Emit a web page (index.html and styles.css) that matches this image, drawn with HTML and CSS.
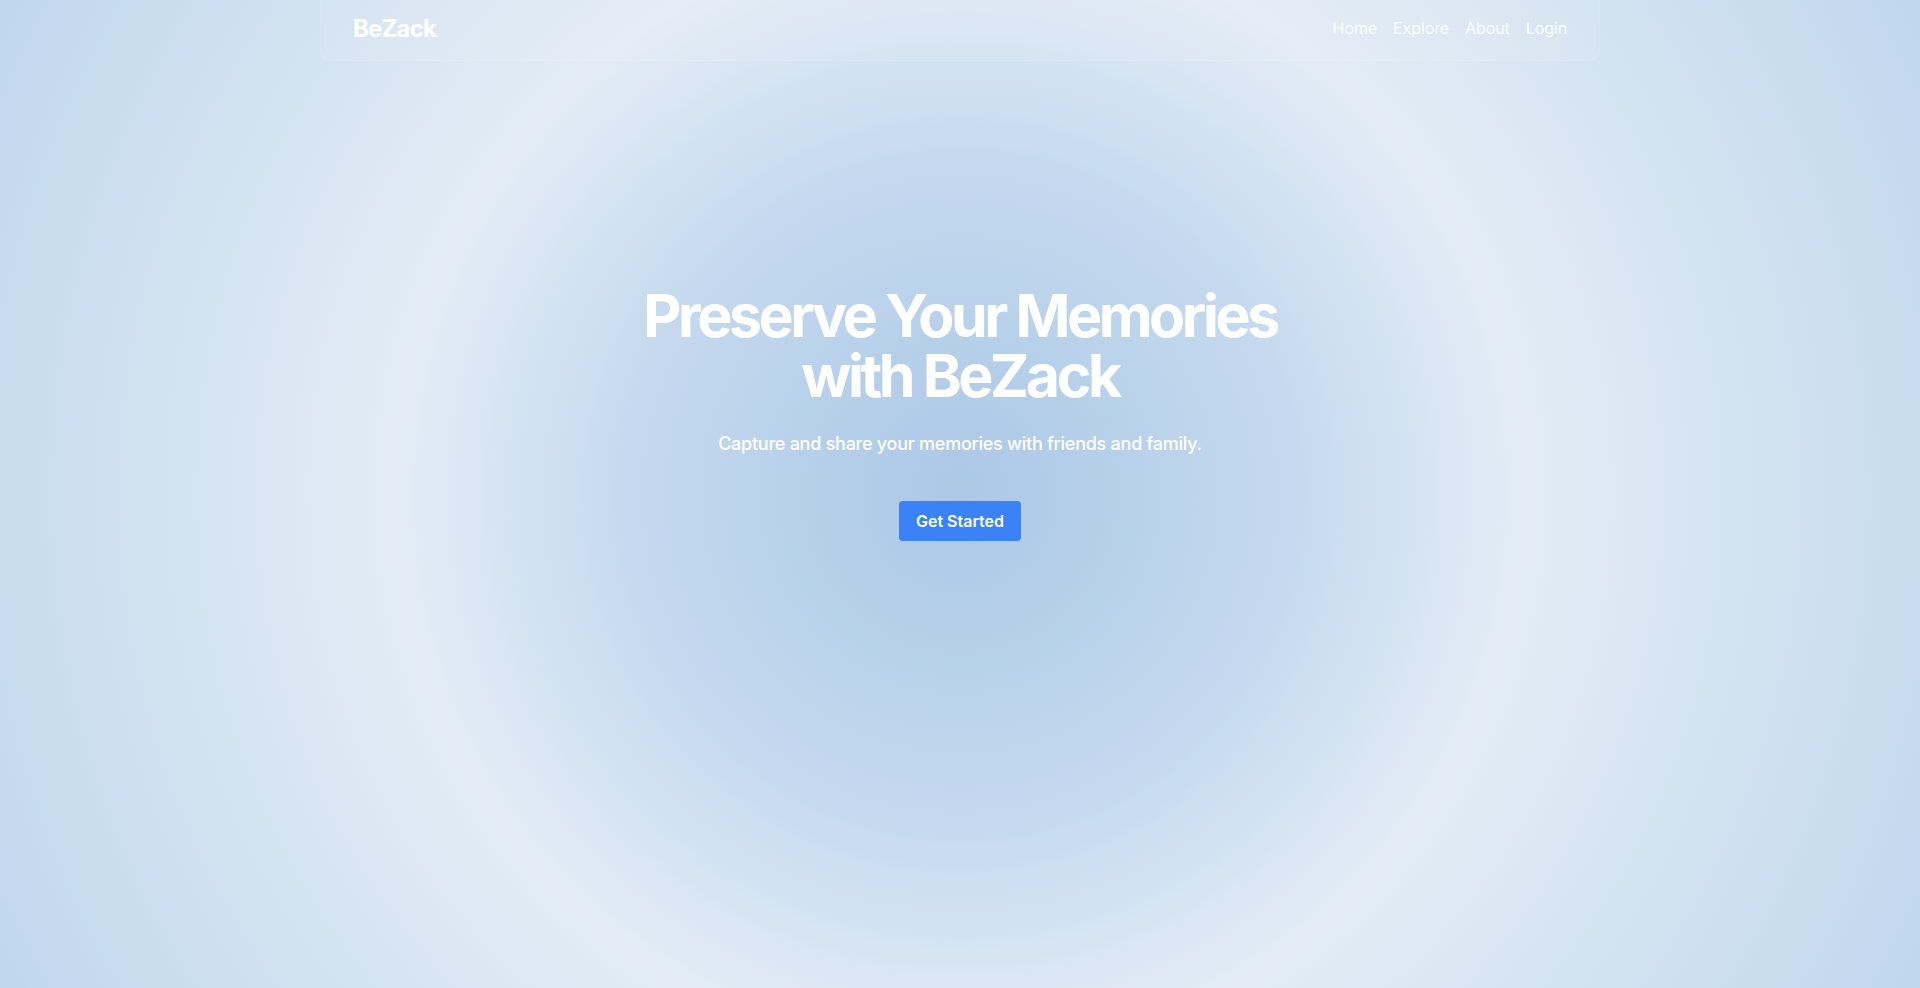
FILE: index.html
```html
<!DOCTYPE html>
<html lang="en">
<head>
<meta charset="utf-8">
<title>BeZack</title>
<link rel="stylesheet" href="styles.css">
</head>
<body>
<div class="page">
  <header class="nav">
    <a class="brand" href="#">BeZack</a>
    <nav class="links">
      <a href="#">Home</a>
      <a href="#">Explore</a>
      <a href="#">About</a>
      <a href="#">Login</a>
    </nav>
  </header>
  <main class="hero">
    <h1 class="title">Preserve Your Memories<br>with BeZack</h1>
    <p class="lead">Capture and share your memories with friends and family.</p>
    <a class="cta" href="#">Get Started</a>
  </main>
</div>
</body>
</html>
```

FILE: styles.css
```css
* { box-sizing: border-box; }
html, body { margin: 0; padding: 0; height: 100%; }
body {
  font-family: Inter, "Noto Sans", "Liberation Sans", sans-serif;
  color: #fff;
  background: radial-gradient(circle farthest-corner at 50% 50%, #abc8e6 0%, #c4d9ee 30%, #e3ecf6 52%, #d4e3f1 72%, #c0d7ec 100%);
  min-height: 988px;
}
a { color: inherit; text-decoration: none; }
.page { display: flex; flex-direction: column; align-items: center; min-height: 100vh; }
.nav {
  width: 1280px;
  height: 61px;
  padding: 0 32px;
  display: flex;
  align-items: center;
  justify-content: space-between;
  background: rgba(255,255,255,0.08);
  border: 1px solid rgba(255,255,255,0.1);
  border-top: none;
  border-radius: 0 0 10px 10px;
}
.brand { font-size: 24px; font-weight: 700; line-height: 32px; letter-spacing: -0.035em; margin-top: -2px; }
.links { display: flex; gap: 16px; font-size: 16px; line-height: 24px; letter-spacing: -0.1px; color: rgba(255,255,255,0.95); margin-top: -4px; }
.hero { display: flex; flex-direction: column; align-items: center; text-align: center; padding-top: 225px; }
.title { margin: 0; font-size: 59px; line-height: 60px; font-weight: 700; letter-spacing: -0.058em; }
.lead { margin: 24px 0 0; font-size: 18px; line-height: 28px; font-weight: 500; letter-spacing: -0.25px; }
.cta {
  margin-top: 43px;
  display: inline-block;
  background: #3b82f6;
  color: #fff;
  font-size: 16px;
  font-weight: 600;
  line-height: 24px;
  padding: 8px 17px;
  border-radius: 4px;
}
```
